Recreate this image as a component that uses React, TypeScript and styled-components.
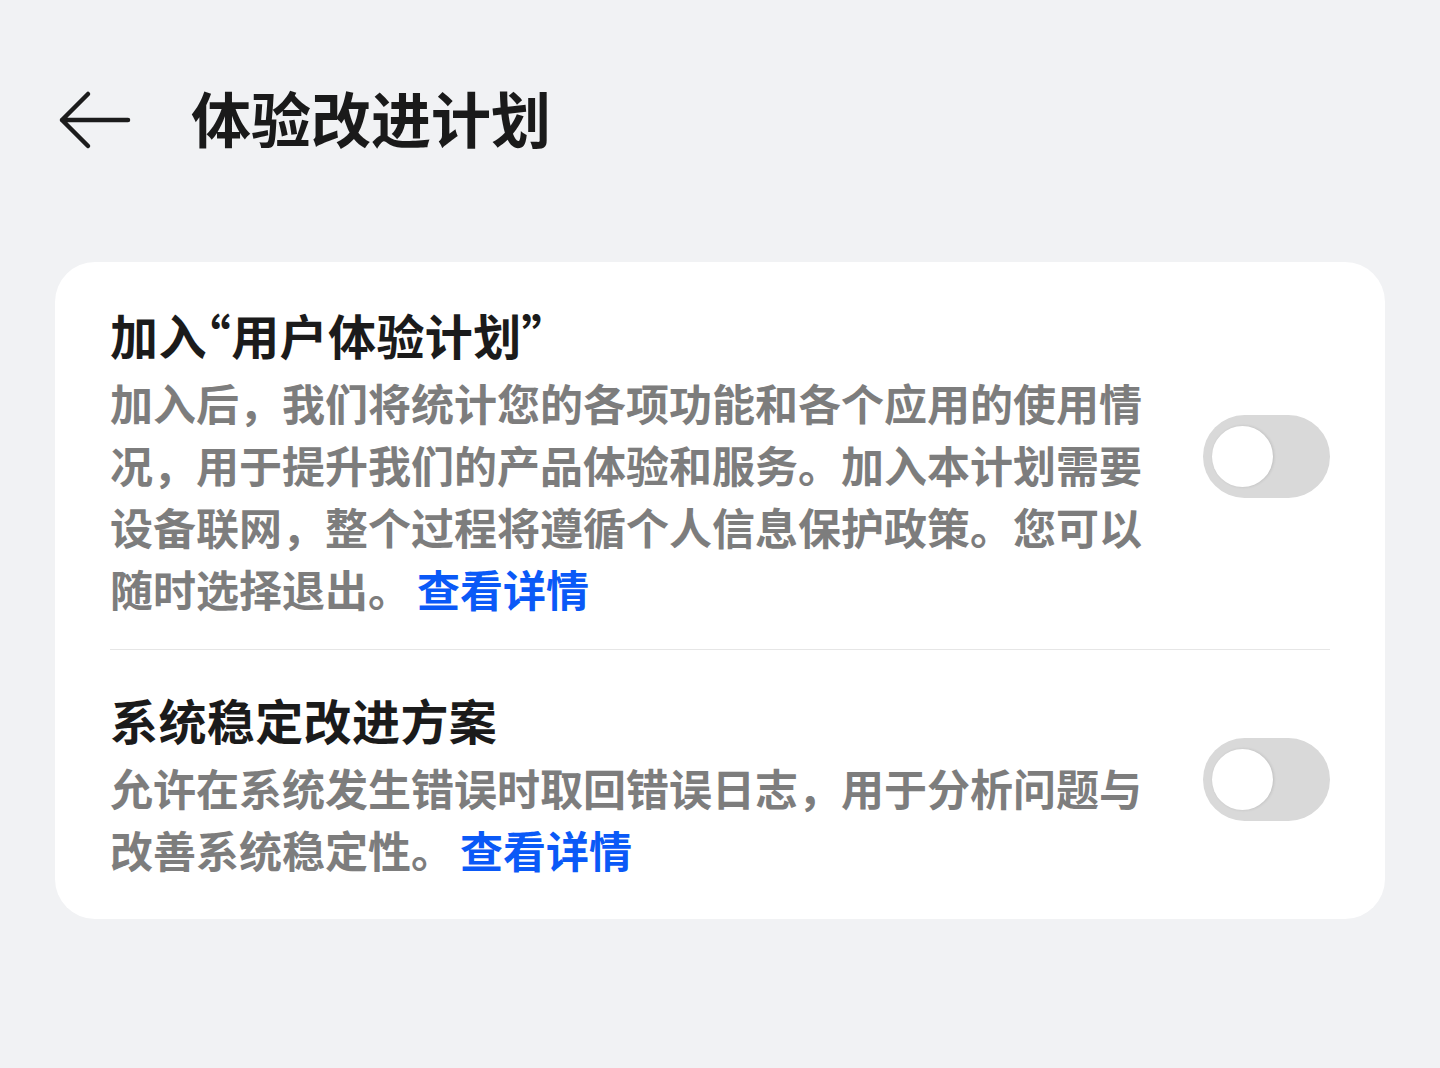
import React from 'react';
import styled, { createGlobalStyle } from 'styled-components';

const GlobalStyle = createGlobalStyle`
    html, body {
        margin: 0;
        padding: 0;
        background: #f1f2f4;
        font-family: "Noto Sans CJK SC", "Noto Sans", sans-serif;
        text-autospace: no-autospace;
    }
`;

type Item = {
    title: string;
    body: string;
};

const items: Item[] = [
    {
        title: '加入“用户体验计划”',
        body: '加入后，我们将统计您的各项功能和各个应用的使用情况，用于提升我们的产品体验和服务。加入本计划需要设备联网，整个过程将遵循个人信息保护政策。您可以随时选择退出。',
    },
    {
        title: '系统稳定改进方案',
        body: '允许在系统发生错误时取回错误日志，用于分析问题与改善系统稳定性。',
    },
];

export default function App() {
    return (
        <Page lang="zh-CN">
            <GlobalStyle />
            <Header>
                <BackButton aria-label="返回">
                    <svg width="74" height="62" viewBox="0 0 74 62" fill="none">
                        <path
                            d="M4 31 H70 M30 5 L4 31 L30 57"
                            stroke="#1c1c1c"
                            strokeWidth="4.5"
                            strokeLinecap="round"
                            strokeLinejoin="round"
                        />
                    </svg>
                </BackButton>
                <Title>体验改进计划</Title>
            </Header>

            <Card>
                {items.map((item, i) => (
                    <React.Fragment key={item.title}>
                        {i > 0 && <Divider />}
                        <Row>
                            <TextCol>
                                <ItemTitle>{item.title}</ItemTitle>
                                <ItemBody>
                                    {item.body}
                                    <Link href="#">查看详情</Link>
                                </ItemBody>
                            </TextCol>
                            <Switch />
                        </Row>
                    </React.Fragment>
                ))}
            </Card>
        </Page>
    );
}

const Page = styled.div`
    width: 1440px;
    min-height: 1068px;
    background: #f1f2f4;
`;

const Header = styled.header`
    height: 240px;
    display: flex;
    align-items: center;
    padding-left: 58px;
    gap: 59px;
`;

const BackButton = styled.button`
    border: 0;
    padding: 0;
    background: none;
    display: flex;
    cursor: pointer;
`;

const Title = styled.h1`
    margin: 0 0 6px;
    font-size: 60px;
    line-height: 72px;
    font-weight: 700;
    color: #1a1a1a;
`;

const Card = styled.section`
    margin: 22px 55px 0;
    background: #ffffff;
    border-radius: 40px;
    padding: 3px 55px 9px;
`;

const Row = styled.div`
    display: flex;
    align-items: center;
    gap: 50px;
    padding: 38px 0 30px;
`;

const TextCol = styled.div`
    flex: 1;
`;

const ItemTitle = styled.div`
    font-size: 48px;
    line-height: 62px;
    font-weight: 700;
    color: #1b1b1b;
    margin-bottom: 6px;
    font-feature-settings: "halt";
    letter-spacing: 0.4px;
`;

const ItemBody = styled.p`
    margin: 0;
    font-size: 43px;
    line-height: 62px;
    font-weight: 700;
    color: #7d7d7d;
`;

const Link = styled.a`
    margin-left: 6px;
    color: #0a59f7;
    font-weight: 700;
    text-decoration: none;
`;

const Divider = styled.hr`
    margin: 0;
    border: 0;
    height: 1px;
    background: #e6e6e6;
`;

const Switch = styled.div`
    flex: none;
    width: 127px;
    height: 83px;
    margin-bottom: 9px;
    border-radius: 42px;
    background: #d9d9d9;
    display: flex;
    align-items: center;
    padding-left: 9px;
    box-sizing: border-box;

    &::after {
        content: '';
        width: 61px;
        height: 61px;
        border-radius: 50%;
        background: #ffffff;
        box-shadow: 1px 0 3px rgba(0, 0, 0, 0.12);
    }
`;
